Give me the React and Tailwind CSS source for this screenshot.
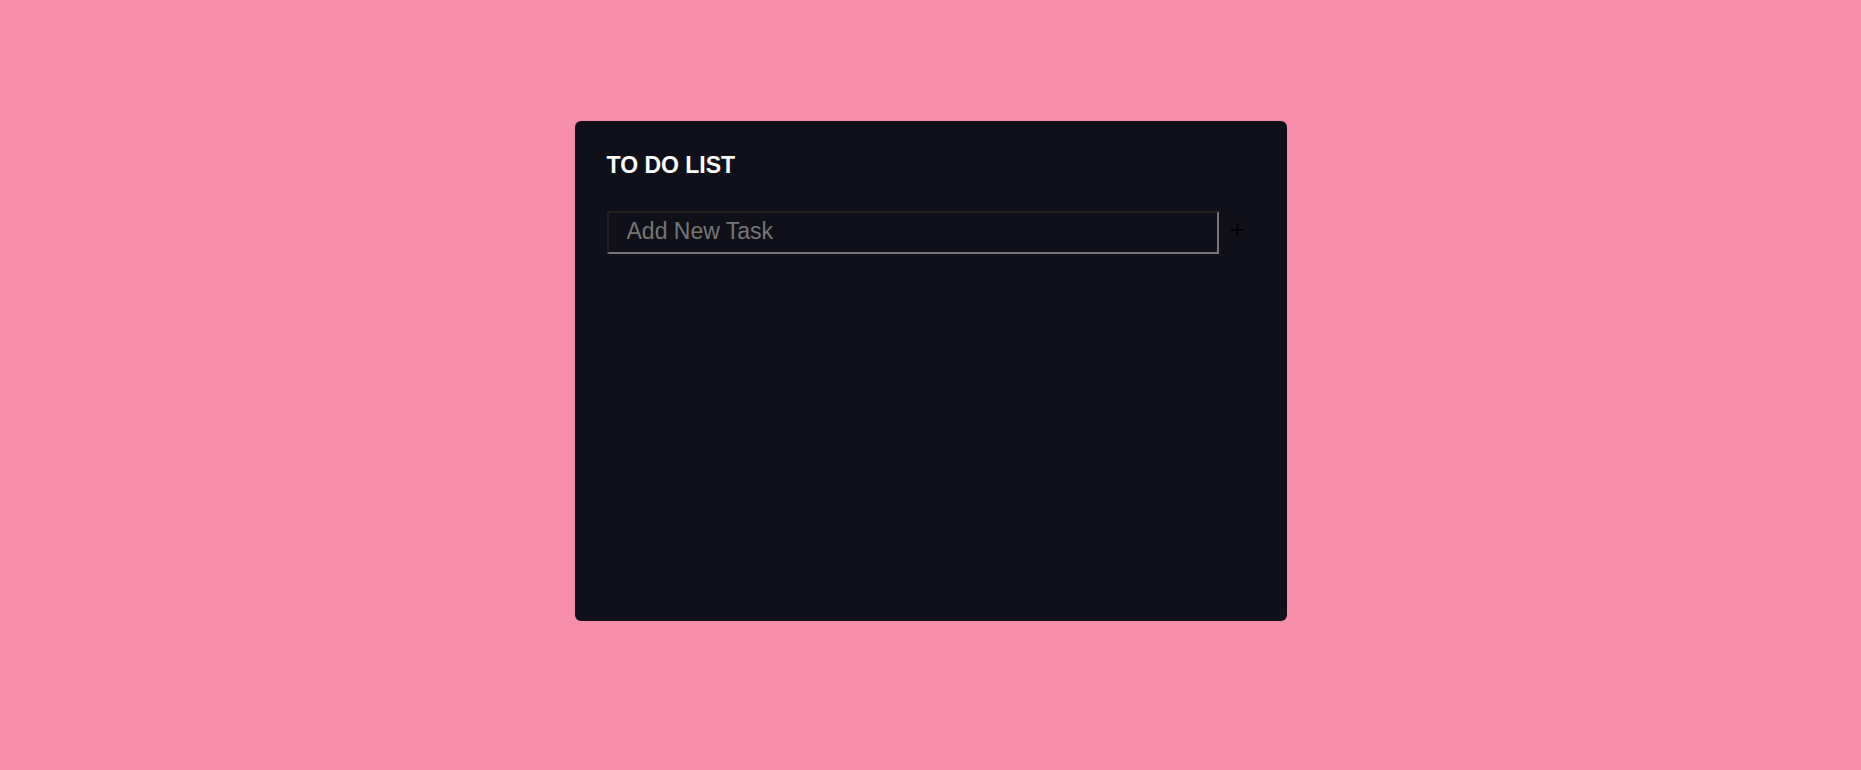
import { useState } from "react";

export default function App() {
  const [task, setTask] = useState("");
  const [tasks, setTasks] = useState([]);

  function addTask(event) {
    event.preventDefault();
    const text = task.trim();
    if (!text) return;
    setTasks([...tasks, text]);
    setTask("");
  }

  return (
    <div className="min-h-screen bg-[#f68dab] px-4 pt-[121px] pb-16 font-['Liberation_Sans',Arial,sans-serif]">
      <main className="mx-auto min-h-[500px] w-full max-w-[712px] rounded-md bg-[#10101a] p-8">
        <h1 className="text-[23px] leading-6 font-bold text-white">TO DO LIST</h1>
        <form onSubmit={addTask} className="mt-[34px] flex items-center">
          <input
            type="text"
            aria-label="Add New Task"
            placeholder="Add New Task"
            value={task}
            onChange={(event) => setTask(event.target.value)}
            className="h-[43px] min-w-0 flex-1 border-2 border-t-[#212121] border-r-[#767676] border-b-[#767676] border-l-[#212121] bg-transparent px-[18px] pb-[2px] text-[23px] text-white outline-none placeholder:text-[#757575]"
          />
          <button
            type="submit"
            aria-label="Add task"
            className="w-9 pb-[6px] pl-[2px] text-center text-[28px] leading-6 text-black"
          >
            +
          </button>
        </form>
        <ul className="mt-6 space-y-3 text-[23px] text-white">
          {tasks.map((item, index) => (
            <li key={index}>{item}</li>
          ))}
        </ul>
      </main>
    </div>
  );
}
